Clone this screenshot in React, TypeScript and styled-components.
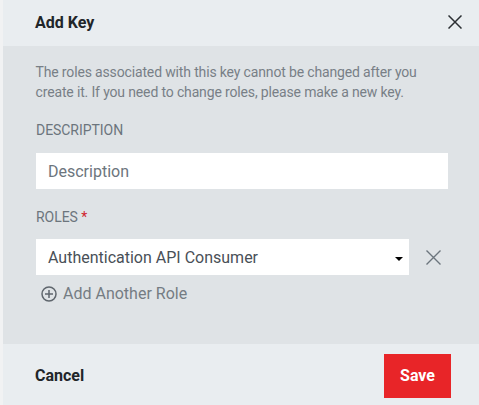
import styled, { createGlobalStyle } from 'styled-components';

const GlobalStyle = createGlobalStyle`
  html, body {
    margin: 0;
    padding: 0;
    background: #f1f2f3;
  }
  * {
    box-sizing: border-box;
  }
`;

const App = () => {
  return (
    <>
      <GlobalStyle />
      <Modal>
        <Header>
          <Title>Add Key</Title>
          <IconButton aria-label="Close">
            <svg width="14" height="14" viewBox="0 0 14 14">
              <path d="M0.5 0.5L13.5 13.5M13.5 0.5L0.5 13.5" stroke="#2b2f33" strokeWidth="1.5" fill="none" />
            </svg>
          </IconButton>
        </Header>
        <Body>
          <Intro>
            The roles associated with this key cannot be changed after you
            <br />
            create it. If you need to change roles, please make a new key.
          </Intro>
          <Label>DESCRIPTION</Label>
          <TextInput placeholder="Description" />
          <RolesLabel>
            ROLES <Required>*</Required>
          </RolesLabel>
          <RoleRow>
            <SelectBox>
              <span>Authentication API Consumer</span>
              <Caret />
            </SelectBox>
            <IconButton aria-label="Remove role">
              <svg width="15" height="15" viewBox="0 0 15 15">
                <path d="M0.5 0.5L14.5 14.5M14.5 0.5L0.5 14.5" stroke="#6c757d" strokeWidth="1.4" fill="none" />
              </svg>
            </IconButton>
          </RoleRow>
          <AddRole>
            <svg width="16" height="16" viewBox="0 0 16 16">
              <circle cx="8" cy="8" r="7" stroke="#5f666d" strokeWidth="1.5" fill="none" />
              <path d="M8 4v8M4 8h8" stroke="#5f666d" strokeWidth="1.5" fill="none" />
            </svg>
            Add Another Role
          </AddRole>
        </Body>
        <Footer>
          <Cancel>Cancel</Cancel>
          <Save>Save</Save>
        </Footer>
      </Modal>
    </>
  );
};
export default App;

const Modal = styled.div`
  margin-left: 3px;
  width: 476px;
  height: 405px;
  display: flex;
  flex-direction: column;
  font-family: Roboto, 'Liberation Sans', sans-serif;
  background: #dfe3e6;
`;
const Header = styled.div`
  height: 46px;
  display: flex;
  align-items: center;
  justify-content: space-between;
  padding: 0 17px 2px 32px;
  background: #e9edf0;
`;
const Title = styled.h2`
  margin: 0;
  font-size: 16px;
  font-weight: 700;
  color: #212529;
`;
const IconButton = styled.button`
  display: flex;
  padding: 0;
  border: none;
  background: none;
`;
const Body = styled.div`
  flex: 1;
  padding: 16px 31px 0 33px;
`;
const Intro = styled.p`
  margin: 0 0 18px -0.5px;
  font-size: 14px;
  line-height: 20px;
  letter-spacing: -0.15px;
  color: #787f86;
`;
const Label = styled.div`
  height: 20px;
  margin-bottom: 13px;
  font-size: 14px;
  line-height: 20px;
  letter-spacing: -0.05px;
  color: #6c757d;
`;
const RolesLabel = styled(Label)`
  margin-top: 18px;
  margin-bottom: 12px;
`;
const Required = styled.span`
  color: #d01f2e;
`;
const TextInput = styled.input`
  display: block;
  width: 412px;
  height: 36px;
  padding: 0 12px;
  border: none;
  background: #fff;
  font-family: inherit;
  font-size: 16px;
  &::placeholder {
    color: #6c757d;
    opacity: 1;
  }
`;
const RoleRow = styled.div`
  display: flex;
  align-items: center;
  gap: 17px;
`;
const SelectBox = styled.div`
  width: 373px;
  height: 36px;
  display: flex;
  align-items: center;
  justify-content: space-between;
  padding: 0 6px 0 12px;
  background: #fff;
  font-size: 16px;
  color: #495057;
`;
const Caret = styled.span`
  width: 0;
  height: 0;
  margin-top: 3px;
  border-left: 4px solid transparent;
  border-right: 4px solid transparent;
  border-top: 4px solid #000;
`;
const AddRole = styled.div`
  display: flex;
  align-items: center;
  gap: 6px;
  margin: 9px 0 0 5px;
  font-size: 16px;
  line-height: 20px;
  color: #757c83;
`;
const Footer = styled.div`
  height: 61px;
  display: flex;
  align-items: flex-start;
  justify-content: space-between;
  padding: 10px 28px 0 32px;
  background: #e9edf0;
`;
const Cancel = styled.button`
  height: 42px;
  padding: 0;
  border: none;
  background: none;
  font-family: inherit;
  font-size: 16px;
  font-weight: 700;
  color: #212529;
`;
const Save = styled.button`
  width: 67px;
  height: 44px;
  padding: 0 0 2px;
  border: none;
  background: #e82528;
  color: #fff;
  font-family: inherit;
  font-size: 16px;
  font-weight: 700;
`;
